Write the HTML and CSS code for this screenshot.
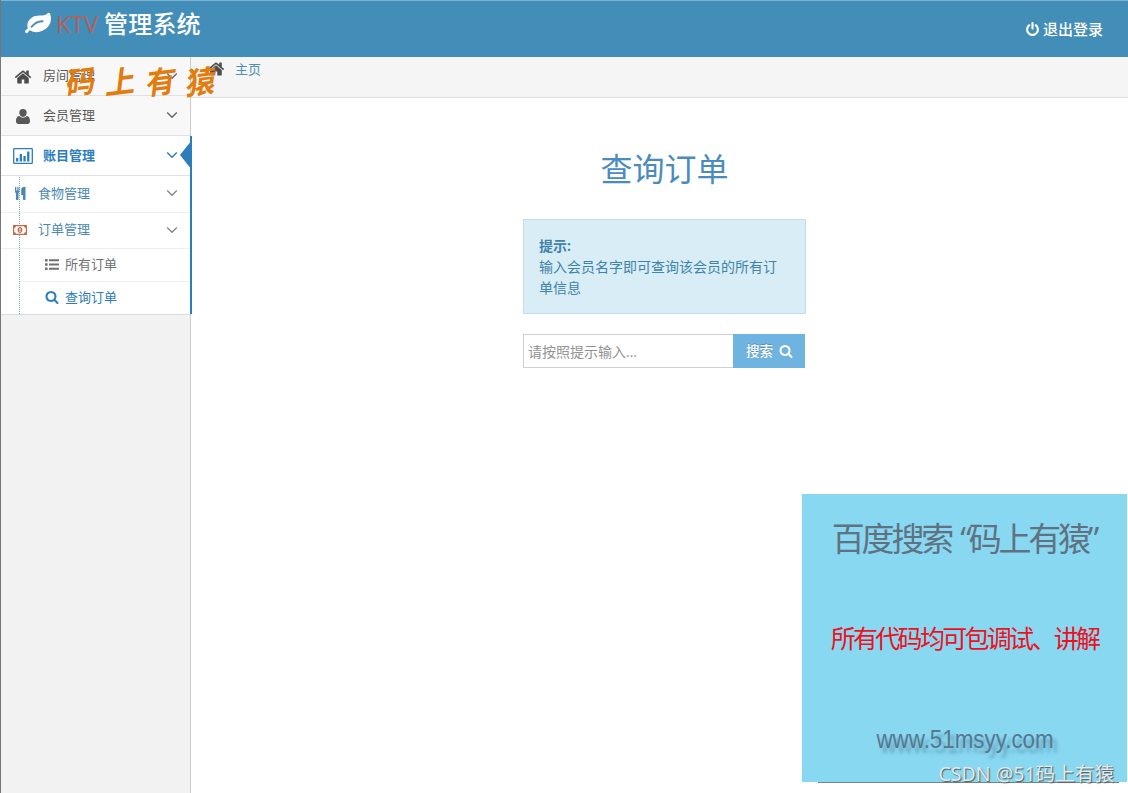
FILE: index.html
```html
<!DOCTYPE html>
<html lang="zh-CN">
<head>
<meta charset="utf-8">
<title>KTV 管理系统</title>
<link rel="stylesheet" href="styles.css">
</head>
<body>
<svg class="defs" width="0" height="0">
  <symbol id="home" viewBox="0 0 1792 1792"><path d="M1472 992v480q0 26-19 45t-45 19h-384v-384h-256v384h-384q-26 0-45-19t-19-45v-480q0-1 .5-3t.5-3l575-474 575 474q1 2 1 6zm223-69l-62 74q-8 9-21 11h-3q-13 0-21-7l-692-577-692 577q-12 8-24 7-13-2-21-11l-62-74q-8-10-7-23.500t11-21.500l719-599q32-26 76-26t76 26l244 204v-195q0-14 9-23t23-9h192q14 0 23 9t9 23v408l219 182q10 8 11 21.500t-7 23.500z"/></symbol>
  <symbol id="search" viewBox="0 0 1792 1792"><path d="M1216 832q0-185-131.500-316.500t-316.500-131.500-316.500 131.500-131.500 316.500 131.500 316.500 316.500 131.500 316.500-131.500 131.500-316.500zm512 832q0 52-38 90t-90 38q-54 0-90-38l-343-342q-179 124-399 124-143 0-273.500-55.500t-225-150-150-225-55.500-273.500 55.500-273.500 150-225 225-150 273.500-55.500 273.500 55.500 225 150 150 225 55.500 273.500q0 220-124 399l343 343q37 37 37 90z"/></symbol>
  <symbol id="power" viewBox="0 0 1792 1792"><path d="M1664 896q0 156-61 298t-164 245-245 164-298 61-298-61-245-164-164-245-61-298q0-182 80.500-343t226.500-270q43-32 95.500-25t83.500 50q32 42 24.500 94.500t-49.500 84.500q-98 74-151.500 181t-53.500 228q0 104 40.500 198.500t109.500 163.500 163.500 109.500 198.500 40.500 198.500-40.500 163.500-109.500 109.500-163.500 40.500-198.500q0-121-53.500-228t-151.500-181q-42-32-49.500-84.500t24.500-94.500q31-43 84-50t95 25q146 109 226.500 270t80.500 343zm-640-768v640q0 52-38 90t-90 38-90-38-38-90v-640q0-52 38-90t90-38 90 38 38 90z"/></symbol>
  <symbol id="down" viewBox="0 0 12 8"><path d="M1.200 1.500 6 6.200l4.800-4.700" fill="none" stroke="currentColor" stroke-width="1.400"/></symbol>
  <symbol id="leaf" viewBox="0 0 1792 1792"><path d="M1280 704q0-26-19-45t-45-19q-172 0-318 49.500t-259.500 134-235.500 219.500q-19 21-19 45 0 26 19 45t45 19q24 0 45-19 27-24 74-71t67-66q137-124 268.500-176t313.500-52q26 0 45-19t19-45zm512-198q0 95-20 193-46 224-184.500 383t-357.500 268q-214 108-438 108-148 0-286-47-15-5-88-42t-96-37q-16 0-39.500 32t-45 70-52.500 70-60 32q-43 0-63.500-17.500t-45.500-59.500q-2-4-6-11t-5.500-10-3-9.500-1.500-13.500q0-35 31-73.500t68-65.500 68-56 31-48q0-4-14-38t-16-44q-9-51-9-104 0-115 43.500-220t119-184.500 170.500-139 204-95.500q55-18 145-25.500t179.500-9 178.500-6 163.500-24 113.500-56.500l29.500-29.500 29.500-28 27-20 36.500-16 43.500-4.500q39 0 70.500 46t47.500 112 24 124 8 96z"/></symbol>
  <symbol id="user" viewBox="0 0 14 15"><path d="M7 0a3.700 3.700 0 0 1 3.700 3.800C10.700 6 9.200 8 7 8S3.300 6 3.300 3.800A3.700 3.700 0 0 1 7 0zM3.300 7Q4.800 8.800 7 8.800T10.700 7C13.300 7.200 14 9.500 14 12.300c0 1.600-.9 2.700-2.500 2.700h-9C.9 15 0 13.900 0 12.300 0 9.500.7 7.200 3.300 7z"/></symbol>
  <symbol id="chart" viewBox="0 0 20 16"><rect x=".7" y=".7" width="18.600" height="14.600" rx=".6" fill="none" stroke="currentColor" stroke-width="1.300"/><path d="M3 10h2.300v3.500H3zM6.700 6h2.300v7.500H6.700zM10.400 8h2.300v5.500h-2.300zM14.100 3.500h2.300v10h-2.300z"/></symbol>
  <symbol id="cutlery" viewBox="0 0 11 13"><path d="M0 0h1v3.500h.7V0h1v3.500h.7V0h1v4.500Q4.400 5.500 3.500 6v6.300q0 .7-.8.700h-1q-.8 0-.8-.7V6Q0 5.500 0 4.500zM10.500 0v12.300q0 .7-.8.700h-.9q-.8 0-.8-.7V8H6.200V3Q6.200 0 9 0z"/></symbol>
  <symbol id="money" viewBox="0 0 14 10"><path fill-rule="evenodd" d="M0 0h14v10H0zM3 1.200Q2.700 2.700 1.200 3v4q1.500.3 1.800 1.800h8Q11.300 7.300 12.800 7V3Q11.300 2.700 11 1.200z"/><path fill-rule="evenodd" d="M7 2c3.200 0 3.200 6 0 6S3.800 2 7 2zm-.9 1.700v.7h.5v1.500H6v.7h2v-.7h-.5V3.200z"/></symbol>
  <symbol id="list" viewBox="0 0 14 11"><path d="M0 0h2.600v2.400H0zm4 .2h10v2H4zM0 4.300h2.600v2.400H0zm4 .2h10v2H4zM0 8.600h2.600V11H0zm4 .2h10v2H4z"/></symbol>
</svg>
<div class="app">
  <header class="navbar">
    <div class="brand"><svg class="i-leaf"><use href="#leaf"/></svg><span class="ktv">KTV</span><span class="name">管理系统</span></div>
    <a class="logout"><svg class="i-power"><use href="#power"/></svg><span>退出登录</span></a>
  </header>
  <div class="body">
    <aside class="sidebar">
      <nav class="menu">
        <div class="item first"><svg class="i-home"><use href="#home"/></svg><span>房间管理</span><svg class="i-down"><use href="#down"/></svg></div>
        <div class="item"><svg class="i-user"><use href="#user"/></svg><span>会员管理</span><svg class="i-down"><use href="#down"/></svg></div>
        <section class="group">
          <div class="item active"><svg class="i-chart"><use href="#chart"/></svg><span>账目管理</span><svg class="i-down"><use href="#down"/></svg></div>
          <div class="tree">
            <div class="sub food"><svg class="i-food"><use href="#cutlery"/></svg><span>食物管理</span><svg class="i-down"><use href="#down"/></svg></div>
            <div class="sub"><svg class="i-money"><use href="#money"/></svg><span>订单管理</span><svg class="i-down"><use href="#down"/></svg></div>
            <div class="leafitem"><svg class="i-list"><use href="#list"/></svg><span>所有订单</span></div>
            <div class="leafitem current"><svg class="i-find"><use href="#search"/></svg><span>查询订单</span></div>
          </div>
          <svg class="arrow" viewBox="0 0 12 30"><path d="M12 0v30L0 15z"/></svg>
        </section>
      </nav>
    </aside>
    <main class="main">
      <div class="crumbs"><svg class="i-home"><use href="#home"/></svg><a>主页</a></div>
      <div class="content">
        <h1>查询订单</h1>
        <div class="alert"><strong>提示:</strong><br>输入会员名字即可查询该会员的所有订单信息</div>
        <div class="searchbar"><div class="field">请按照提示输入...</div><div class="button"><span>搜索</span><svg class="i-go"><use href="#search"/></svg></div></div>
      </div>
    </main>
  </div>
  <div class="stamp"><span>码</span><span>上</span><span>有</span><span>猿</span></div>
  <div class="promo">
    <div class="p1">百度搜索 “码上有猿”</div>
    <div class="p2">所有代码均可包调试、讲解</div>
    <div class="p3">www.51msyy.com</div>
  </div>
  <div class="credit">CSDN @51码上有猿</div>
</div>
</body>
</html>
```
FILE: styles.css
```css
* { box-sizing: border-box; }
body { margin: 0; font: 13px/20px "Open Sans", "Noto Sans CJK SC", sans-serif; color: #585858; overflow: hidden; }
.defs { position: absolute; }
svg { fill: currentColor; flex: none; display: block; }
.app { position: relative; width: 1128px; height: 793px; display: flex; flex-direction: column; border-left: 1px solid #777; overflow: hidden; background: #fff; }
.navbar { height: 57px; flex: none; background: #438eb9; border-top: 1px solid #80b3d0; display: flex; justify-content: space-between; color: #fff; }
.brand { display: flex; align-items: center; height: 46px; padding-left: 24px; font-size: 24px; }
.i-leaf { width: 26px; height: 26px; }
.ktv { color: #b75f5c; margin-left: 5px; width: 48px; font-weight: 400; font-size: 24px; white-space: nowrap; letter-spacing: -.1px; }
.name { line-height: 30px; font-weight: 500; letter-spacing: .2px; }
.logout { display: flex; align-items: center; height: 57px; padding-right: 25px; font-size: 15px; font-weight: 500; }
.logout span { padding-bottom: 2px; }
.i-power { width: 15px; height: 15px; margin-right: 3px; }
.body { flex: 1; display: flex; min-height: 0; }
.sidebar { width: 190px; flex: none; background: #f2f2f2; border-right: 1px solid #ccc; }
.menu { background: #f8f8f8; border-bottom: 1px solid #ddd; }
.item { height: 40px; display: flex; align-items: center; padding: 0 12px; border-bottom: 1px solid #e0e0e0; position: relative; }
.first { height: 39px; }
.item span { width: 124px; padding-bottom: 2px; }
.i-home { width: 18px; height: 18px; color: #4c4c4c; }
.item .i-home { margin: 1px 11px 0 1px; }
.i-user { width: 14px; height: 15px; margin: 2px 13px 0 3px; }
.i-chart { width: 20px; height: 16px; margin-right: 10px; margin-top: 1px; }
.i-down { width: 12px; height: 8px; color: #666; }
.item .i-down { margin-top: -1px; margin-left: -1px; }
.group { background: #fff; position: relative; border-right: 2px solid #2b7dbc; margin-right: -2px; }
.active, .active .i-down { color: #2b7dbc; }
.active { font-weight: 700; }
.arrow { position: absolute; right: -1px; top: 4px; width: 11px; height: 30px; color: #2b7dbc; }
.tree { position: relative; height: 138px; }
.tree::before { content: ""; position: absolute; left: 18px; top: 1px; bottom: 0; border-left: 1px dotted #7ba6c8; }
.sub { height: 36px; display: flex; align-items: center; padding-left: 12px; color: #4a88b0; border-bottom: 1px solid #eee; position: relative; }
.sub span { width: 128px; padding-bottom: 3px; }
.sub .i-down { color: #888; margin-top: -2px; }
.food { height: 37px; }
.i-food { width: 11px; height: 13px; margin: -1px 12px 0 2px; }
.i-money { width: 14px; height: 10px; color: #c66b49; margin: -2px 11px 0 0; background: #fff; }
.leafitem { height: 33px; margin-left: 19px; display: flex; align-items: center; padding-left: 25px; color: #707070; border-bottom: 1px solid #eee; gap: 6px; }
.leafitem span { padding-bottom: 2px; }
.leafitem svg { margin-top: -2px; }
.current { color: #2b7dbc; height: 32px; border: 0; }
.i-list { width: 14px; height: 11px; }
.i-find { width: 14px; height: 14px; }
.main { flex: 1; display: flex; flex-direction: column; }
.crumbs { height: 41px; background: #f5f5f5; border-bottom: 1px solid #e2e2e2; display: flex; align-items: flex-start; padding: 2px 0 0 15px; color: #4c8fbd; }
.crumbs .i-home { margin: 1px 10px 0 1px; }
.content { width: 283px; margin-left: 332px; }
h1 { margin: 49px 0 29px; font-size: 32px; line-height: 43px; font-weight: 400; color: #4a8cc0; text-align: center; }
.alert { height: 95px; padding: 15px; background: #d9edf7; border: 1px solid #bcdfee; color: #4083a8; font-size: 14px; line-height: 21px; margin-bottom: 20px; }
.searchbar { display: flex; height: 34px; width: 282px; }
.field { width: 210px; border: 1px solid #d0d0d0; border-right: 0; padding-left: 4px; line-height: 33px; font-size: 14px; color: #939393; }
.button { flex: 1; background: #6fb3e0; color: #fff; display: flex; align-items: center; padding-left: 13px; gap: 6px; font-size: 13.5px; font-weight: 500; text-shadow: 0 -1px 0 rgba(0,0,0,.2); }
.button span { padding-bottom: 1px; }
.i-go { width: 14px; height: 14px; }
.stamp { position: absolute; left: 64px; top: 59px; display: flex; gap: 7px; font-size: 33px; line-height: 42px; font-weight: 700; color: #e37c0d; font-family: "Noto Sans CJK SC", sans-serif; }
.stamp span { transform: skew(-7deg, -7deg) scale(.9, .94); }
.promo { position: absolute; left: 801px; top: 494px; width: 325px; height: 288px; background: #88d8f1; color: #607181; text-align: center; white-space: nowrap; display: flex; flex-direction: column; align-items: center; }
.p1 { font-size: 33px; line-height: 44px; margin-top: 23px; padding-right: 1px; letter-spacing: -3.200px; word-spacing: 4px; font-family: "Open Sans", "Noto Sans CJK SC", sans-serif; }
.p2 { margin-top: 57px; font-size: 25px; line-height: 38px; letter-spacing: -2.700px; color: #f0101c; font-family: "Noto Sans CJK SC", sans-serif; }
.p3 { margin-top: 68px; font: 26px/30px "Liberation Sans", Arial, sans-serif; transform: translateX(1px) scaleX(.86); text-shadow: 5px 5px 4px rgba(50,80,110,.4); color: #567890; }
.promo::after { content: ""; position: absolute; left: 16px; right: 8px; bottom: -1px; border-bottom: 1px solid #70878f; }
.credit { position: absolute; right: 14px; top: 761px; font-size: 19.600px; line-height: 26px; color: #e4eaee; text-shadow: 1px 1px 1px #555; white-space: nowrap; }
```
